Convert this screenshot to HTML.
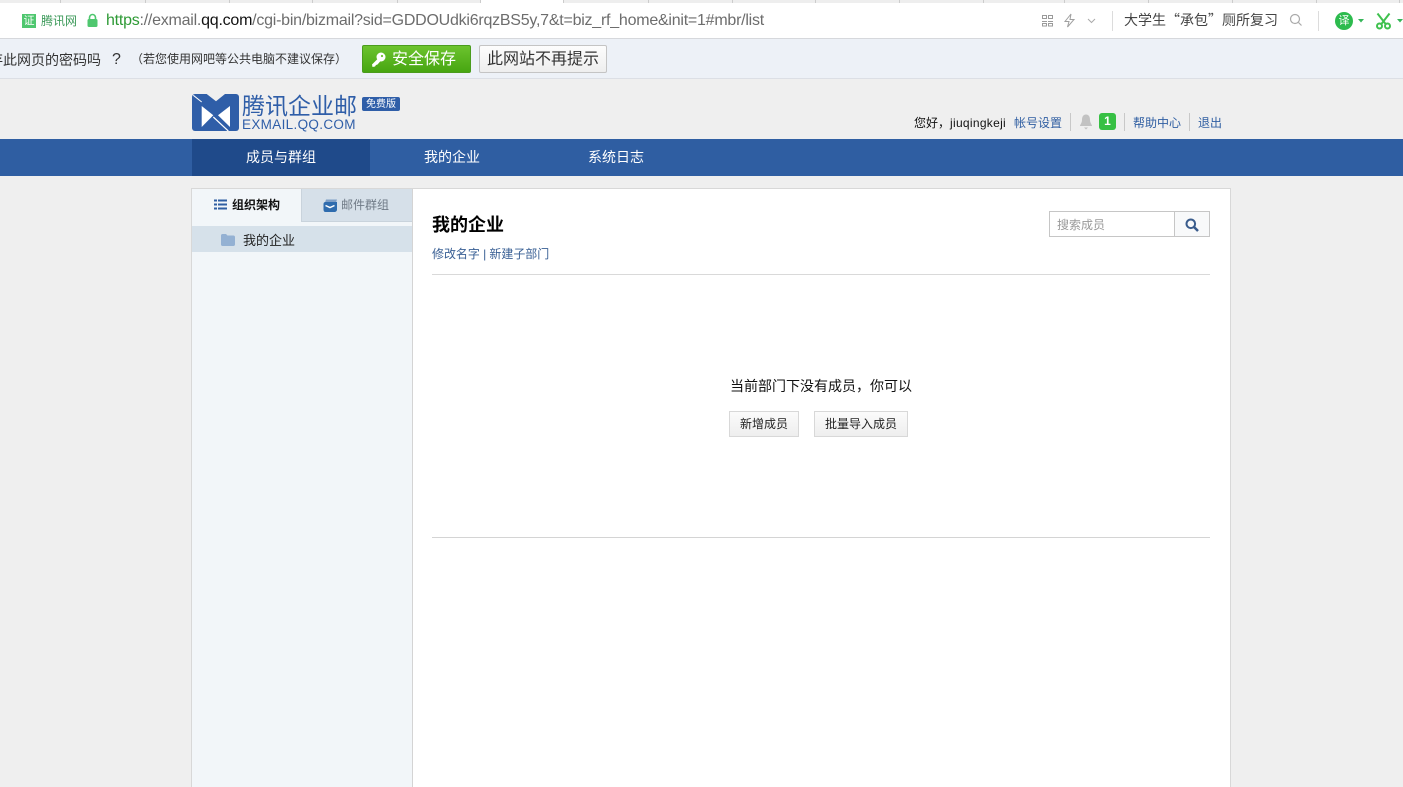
<!DOCTYPE html>
<html lang="zh">
<head>
<meta charset="utf-8">
<title>腾讯企业邮</title>
<style>
html,body{margin:0;padding:0;width:1403px;height:787px;overflow:hidden;}
body{background:#efefef;font-family:"Liberation Sans","Noto Sans CJK SC",sans-serif;color:#000;}
#w{position:relative;width:1403px;height:787px;overflow:hidden;}
.a{position:absolute;}
.t{position:absolute;white-space:nowrap;line-height:1;}
.lnk{color:#2f5ea2;}
svg{position:absolute;display:block;}
</style>
</head>
<body>
<div id="w">
<!-- browser address bar -->
<div class="a" style="left:0;top:0;width:1403px;height:38px;background:#fff;border-bottom:1px solid #d6d8dc;"></div>
<div class="a" style="left:0;top:0;width:1403px;height:3px;background:#eeeeee;"></div>
<div class="a" style="left:480px;top:0;width:84px;height:3px;background:#fff;border-left:1px solid #ccc;border-right:1px solid #ccc;box-sizing:border-box;"></div>
<div class="a" style="left:60px;top:0;width:1px;height:3px;background:#ccc;"></div>
<div class="a" style="left:145px;top:0;width:1px;height:3px;background:#ccc;"></div>
<div class="a" style="left:229px;top:0;width:1px;height:3px;background:#ccc;"></div>
<div class="a" style="left:312px;top:0;width:1px;height:3px;background:#ccc;"></div>
<div class="a" style="left:397px;top:0;width:1px;height:3px;background:#ccc;"></div>
<div class="a" style="left:648px;top:0;width:1px;height:3px;background:#ccc;"></div>
<div class="a" style="left:732px;top:0;width:1px;height:3px;background:#ccc;"></div>
<div class="a" style="left:815px;top:0;width:1px;height:3px;background:#ccc;"></div>
<div class="a" style="left:899px;top:0;width:1px;height:3px;background:#ccc;"></div>
<div class="a" style="left:983px;top:0;width:1px;height:3px;background:#ccc;"></div>
<div class="a" style="left:1064px;top:0;width:1px;height:3px;background:#ccc;"></div>
<div class="a" style="left:1148px;top:0;width:1px;height:3px;background:#ccc;"></div>
<div class="a" style="left:1232px;top:0;width:1px;height:3px;background:#ccc;"></div>
<div class="a" style="left:1316px;top:0;width:1px;height:3px;background:#ccc;"></div>
<div class="a" style="left:1399px;top:0;width:1px;height:3px;background:#ccc;"></div>

<div class="a" style="left:22px;top:14px;width:14px;height:14px;background:#4fc76f;color:#fff;font-size:11px;line-height:14px;text-align:center;">证</div>
<div class="t" style="left:41px;top:15px;font-size:12px;color:#3d9a5a;">腾讯网</div>
<svg style="left:86px;top:13px" width="13" height="15" viewBox="0 0 13 15"><path d="M3.500 7V4.500a3 3 0 0 1 6 0V7" fill="none" stroke="#4fc76f" stroke-width="1.600"/><rect x="1.500" y="6" width="10" height="8" rx="1.500" fill="#4fc76f"/></svg>
<div class="t" style="left:106px;top:13px;font-size:16px;letter-spacing:-.24px;color:#6d6d6d;"><span style="color:#2e9a35">https</span>://exmail.<span style="color:#111">qq.com</span>/cgi-bin/bizmail?sid=GDDOUdki6rqzBS5y,7&amp;t=biz_rf_home&amp;init=1#mbr/list</div>

<svg style="left:1041px;top:14px" width="13" height="13" viewBox="0 0 13 13" fill="none" stroke="#9a9a9a"><rect x="1.500" y="1.500" width="4" height="3"/><rect x="7.500" y="1.500" width="4" height="3"/><path d="M1 7.500h5M7 7.500h5"/><rect x="1.500" y="9.500" width="4" height="2.500"/><rect x="7.500" y="9.500" width="4" height="2.500"/></svg>
<svg style="left:1063px;top:13px" width="13" height="15" viewBox="0 0 13 15" fill="none" stroke="#a0a0a0"><path d="M8 1L2 8.500h4L4.500 14 11 6.500H7z"/></svg>
<svg style="left:1087px;top:18px" width="9" height="6" viewBox="0 0 9 6" fill="none" stroke="#aaa"><path d="M1 1l3.500 3.500L8 1"/></svg>
<div class="a" style="left:1112px;top:11px;width:1px;height:20px;background:#dcdcdc;"></div>
<div class="t" style="left:1124px;top:13px;font-size:14px;color:#444;font-family:'Noto Sans CJK SC',sans-serif;">大学生“承包”厕所复习</div>
<svg style="left:1289px;top:13px" width="14" height="14" viewBox="0 0 14 14" fill="none" stroke="#aaa" stroke-width="1.200"><circle cx="6" cy="6" r="4.500"/><path d="M9.500 9.500l3 3"/></svg>
<div class="a" style="left:1318px;top:11px;width:1px;height:20px;background:#dcdcdc;"></div>
<div class="a" style="left:1335px;top:12px;width:18px;height:18px;border-radius:50%;background:#2dbb4e;color:#fff;font-size:11px;line-height:18px;text-align:center;">译</div>
<svg style="left:1358px;top:19px" width="7" height="4" viewBox="0 0 7 4"><path d="M0 0h6L3 3.500z" fill="#35b558"/></svg>
<svg style="left:1375px;top:12px" width="17" height="18" viewBox="0 0 17 18" fill="none" stroke="#3fc14e" stroke-width="2"><path d="M2.500 1.500l8.500 11M14.500 1.500L6 12.500"/><circle cx="4.500" cy="14" r="2.500"/><circle cx="12.500" cy="14" r="2.500"/></svg>
<svg style="left:1397px;top:19px" width="7" height="4" viewBox="0 0 7 4"><path d="M0 0h6L3 3.500z" fill="#35b558"/></svg>

<!-- save password bar -->
<div class="a" style="left:0;top:39px;width:1403px;height:39px;background:#edf1f7;border-bottom:1px solid #dcdfe5;"></div>
<div class="t" style="left:-11px;top:53px;font-size:14px;color:#333;">存此网页的密码吗</div>
<div class="t" style="left:112px;top:52px;font-size:16px;color:#333;">?</div>
<div class="t" style="left:131px;top:53px;font-size:12px;color:#333;">（若您使用网吧等公共电脑不建议保存）</div>
<div class="a" style="left:362px;top:45px;width:109px;height:28px;border-radius:2px;background:linear-gradient(#6cc32e,#47a611);border:1px solid #4a9c1d;box-sizing:border-box;"></div>
<svg style="left:370px;top:51px" width="17" height="17" viewBox="0 0 17 17"><circle cx="11" cy="6" r="4.500" fill="#fff"/><path d="M8.500 7L2 13.500 2.500 16 5 15.500 6 14 7.500 13.500 11 9.500z" fill="#fff"/><circle cx="12" cy="5" r="1.100" fill="#6cc32e"/></svg>
<div class="t" style="left:392px;top:52px;font-size:16px;color:#fff;">安全保存</div>
<div class="a" style="left:479px;top:45px;width:128px;height:28px;border-radius:2px;background:linear-gradient(#fdfdfd,#eeeeee);border:1px solid #c4c4c4;box-sizing:border-box;"></div>
<div class="t" style="left:487px;top:52px;font-size:16px;color:#333;">此网站不再提示</div>

<!-- logo -->
<svg style="left:192px;top:94px" width="47" height="37" viewBox="0 0 47 37">
<rect width="47" height="37" rx="3" fill="#2f5ea8"/>
<path d="M14.700 0H33L24 7.300z" fill="#efefef"/>
<path d="M9.700 12L21.300 21.300 9.700 33z" fill="#fff"/>
<path d="M38 12L26 21.300 38 33z" fill="#fff"/>
<path d="M1.300 1.300L9.700 8" stroke="#fff" stroke-width="1" fill="none"/>
<path d="M21.300 23L36.300 37" stroke="#fff" stroke-width="1.200" fill="none"/>
</svg>
<div class="t" style="left:242px;top:95px;font-size:23px;color:#2f5ea8;">腾讯企业邮</div>
<div class="t" style="left:242px;top:118px;font-size:13.500px;letter-spacing:.33px;color:#2f5ea8;">EXMAIL.QQ.COM</div>
<div class="a" style="left:362px;top:97px;width:38px;height:14px;background:#2f5ea8;border-radius:2px;color:#fff;font-size:10px;line-height:15px;text-align:center;">免费版</div>

<!-- top right -->
<div class="t" style="left:914px;top:117px;font-size:12px;color:#111;">您好，<span style="letter-spacing:.3px">jiuqingkeji</span></div>
<div class="t lnk" style="left:1014px;top:117px;font-size:12px;">帐号设置</div>
<div class="a" style="left:1070px;top:113px;width:1px;height:18px;background:#c8c8c8;"></div>
<svg style="left:1079px;top:114px" width="14" height="16" viewBox="0 0 14 16"><path d="M7 0.500C4 .5 3 3 3 6c0 3-2 4.500-2 6h12c0-1.500-2-3-2-6 0-3-1-5.500-4-5.500z" fill="#c2c2c2"/><path d="M5 13.500h4L7 15.500z" fill="#c2c2c2"/></svg>
<div class="a" style="left:1099px;top:113px;width:17px;height:17px;background:#37c044;border-radius:3px;color:#fff;font-size:12px;font-weight:bold;line-height:17px;text-align:center;">1</div>
<div class="a" style="left:1124px;top:113px;width:1px;height:18px;background:#c8c8c8;"></div>
<div class="t lnk" style="left:1133px;top:117px;font-size:12px;">帮助中心</div>
<div class="a" style="left:1189px;top:113px;width:1px;height:18px;background:#c8c8c8;"></div>
<div class="t lnk" style="left:1198px;top:117px;font-size:12px;">退出</div>

<!-- nav -->
<div class="a" style="left:0;top:139px;width:1403px;height:37px;background:#2f5ea2;"></div>
<div class="a" style="left:192px;top:139px;width:178px;height:37px;background:#1f4a8a;"></div>
<div class="t" style="left:246px;top:150px;font-size:14px;color:#fff;">成员与群组</div>
<div class="t" style="left:424px;top:150px;font-size:14px;color:#fff;">我的企业</div>
<div class="t" style="left:588px;top:150px;font-size:14px;color:#fff;">系统日志</div>

<!-- main panel -->
<div class="a" style="left:191px;top:188px;width:1040px;height:599px;background:#fff;border:1px solid #d8d8d8;border-bottom:0;box-sizing:border-box;"></div>
<!-- sidebar -->
<div class="a" style="left:192px;top:189px;width:221px;height:598px;background:#f2f6f9;border-right:1px solid #d4d4d4;box-sizing:border-box;"></div>
<div class="a" style="left:301px;top:189px;width:111px;height:33px;background:#d6e0e9;border-left:1px solid #c9d3dc;border-bottom:1px solid #c9d3dc;box-sizing:border-box;"></div>
<svg style="left:214px;top:199px" width="13" height="12" viewBox="0 0 13 12" fill="#2f5ea2"><rect x="0" y="0.500" width="3" height="2"/><rect x="4" y="0.500" width="9" height="2"/><rect x="0" y="4.500" width="3" height="2"/><rect x="4" y="4.500" width="9" height="2"/><rect x="0" y="8.500" width="3" height="2"/><rect x="4" y="8.500" width="9" height="2"/></svg>
<div class="t" style="left:232px;top:199px;font-size:12px;font-weight:bold;color:#111;">组织架构</div>
<svg style="left:323px;top:199px" width="15" height="14" viewBox="0 0 15 14"><path d="M3 0.500h11l-1 3H2z" fill="#7f9fc6"/><path d="M2.500 3H14v7.500c0 1.400-1 2.500-2.500 2.500h-9C1.200 13 .5 12 .5 10.500V5C.5 3.800 1.300 3 2.500 3z" fill="#2f6cae"/><path d="M2.500 6.500L7 8.500l4.500-2" stroke="#fff" stroke-width="1.500" fill="none"/></svg>
<div class="t" style="left:341px;top:199px;font-size:12px;color:#6f7a86;">邮件群组</div>
<div class="a" style="left:192px;top:226px;width:220px;height:26px;background:#d6e1ea;"></div>
<svg style="left:221px;top:234px" width="14" height="12" viewBox="0 0 14 12"><path d="M0 1.500C0 .7.600 0 1.500 0H5l1.500 1.500h6c.8 0 1.500.7 1.500 1.500v7.500c0 .8-.7 1.500-1.500 1.500h-11C.600 12 0 11.300 0 10.500z" fill="#94b1d3"/></svg>
<div class="t" style="left:243px;top:234px;font-size:13px;color:#222;">我的企业</div>

<!-- content -->
<div class="t" style="left:432px;top:216px;font-size:18px;font-weight:bold;color:#000;">我的企业</div>
<div class="t lnk" style="left:432px;top:248px;font-size:12px;color:#3a6095;letter-spacing:-.05px;">修改名字 | 新建子部门</div>
<div class="a" style="left:432px;top:274px;width:778px;height:1px;background:#d9d9d9;"></div>

<div class="a" style="left:1049px;top:211px;width:161px;height:26px;border:1px solid #c6c6c6;box-sizing:border-box;background:#fff;"></div>
<div class="a" style="left:1174px;top:212px;width:35px;height:24px;border-left:1px solid #c6c6c6;background:#f8f9fa;box-sizing:border-box;"></div>
<div class="t" style="left:1057px;top:219px;font-size:12px;color:#999;">搜索成员</div>
<svg style="left:1185px;top:218px" width="14" height="14" viewBox="0 0 14 14" fill="none" stroke="#3a5c8c"><circle cx="5.800" cy="5.800" r="4.300" stroke-width="2"/><path d="M9 9l4 4" stroke-width="2.500"/></svg>

<div class="t" style="left:730px;top:379px;font-size:14px;color:#111;">当前部门下没有成员，你可以</div>
<div class="a" style="left:729px;top:411px;width:70px;height:26px;background:linear-gradient(#fbfbfb,#eeeeee);border:1px solid #d8d8d8;box-sizing:border-box;color:#222;font-size:12px;line-height:24px;text-align:center;">新增成员</div>
<div class="a" style="left:814px;top:411px;width:94px;height:26px;background:linear-gradient(#fbfbfb,#eeeeee);border:1px solid #d8d8d8;box-sizing:border-box;color:#222;font-size:12px;line-height:24px;text-align:center;">批量导入成员</div>

<div class="a" style="left:432px;top:537px;width:778px;height:1px;background:#d4d4d4;"></div>
</div>
</body>
</html>
